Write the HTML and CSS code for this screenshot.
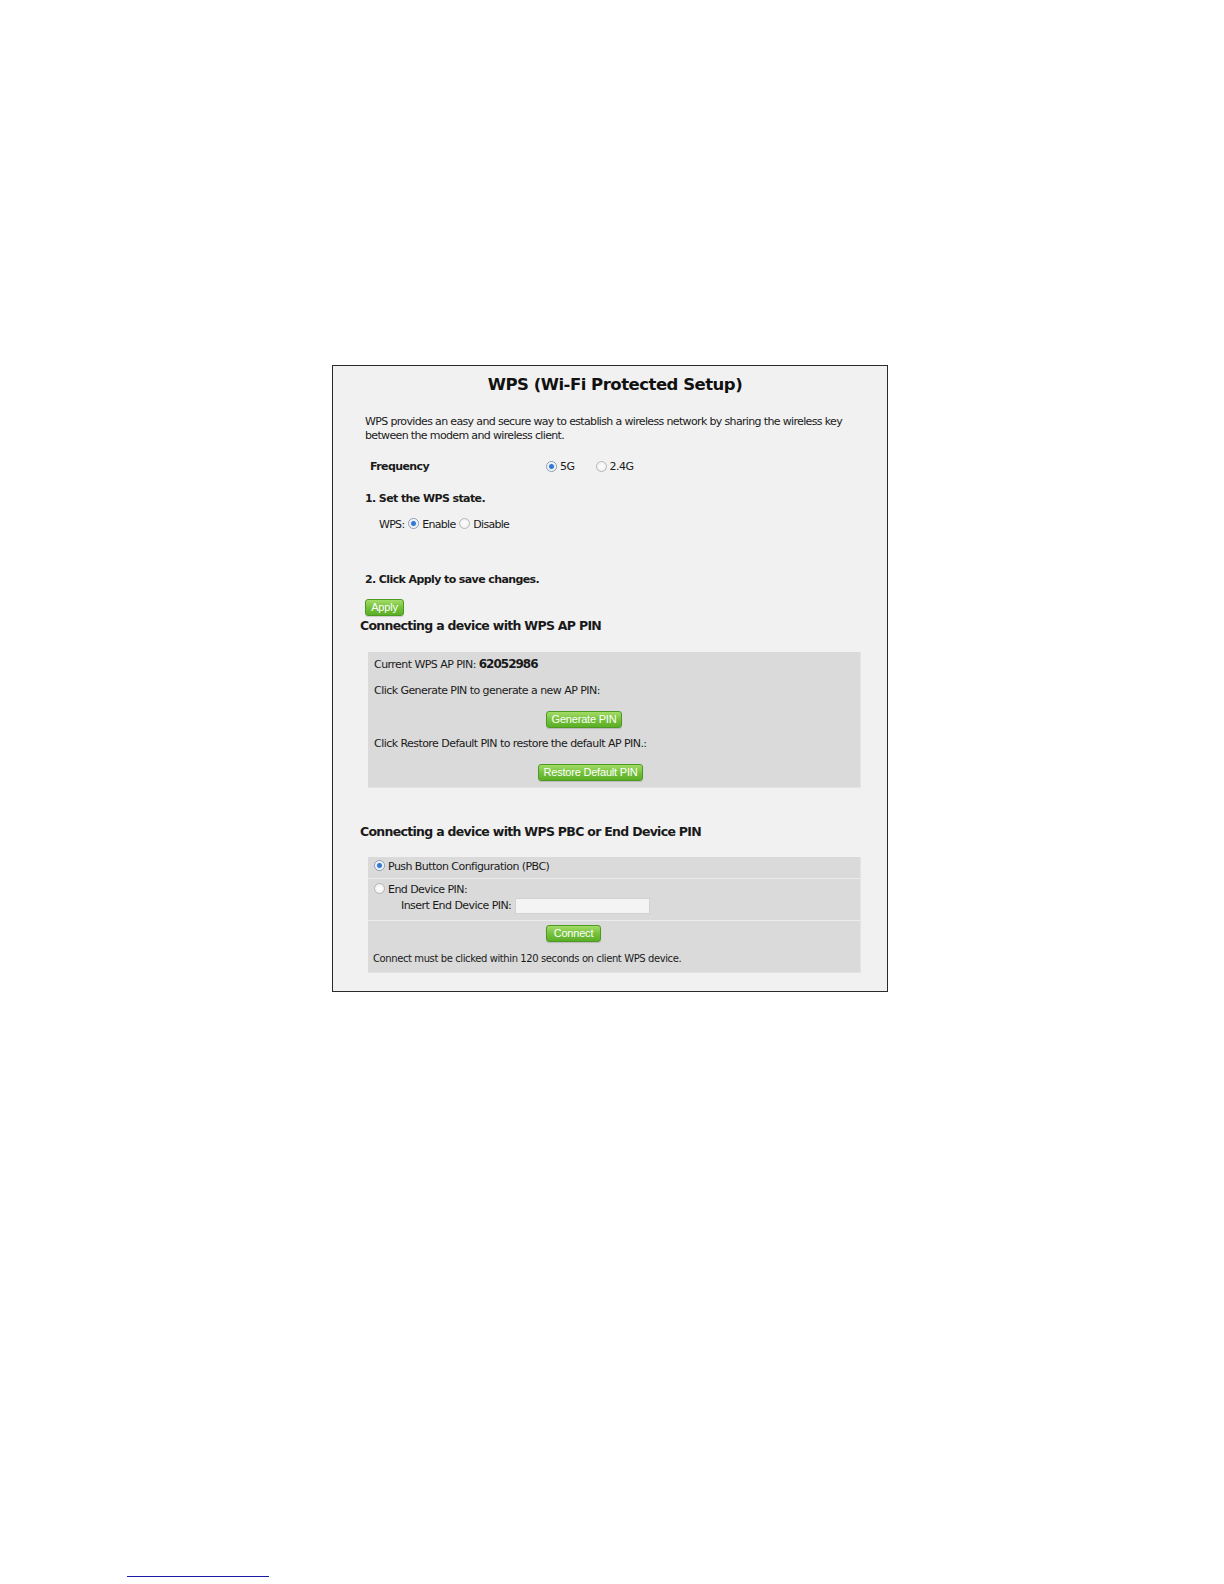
FILE: index.html
```html
<!DOCTYPE html>
<html>
<head>
    <meta charset="UTF-8">
    <title>WPS (Wi-Fi Protected Setup)</title>
    <link rel="stylesheet" href="styles.css">
</head>
<body>

<div class="screen">
    <h1 class="title">WPS (Wi-Fi Protected Setup)</h1>

    <p class="intro">WPS provides an easy and secure way to establish a wireless network by sharing the wireless key<br>between the modem and wireless client.</p>

    <div class="freq-row">
        <span class="freq-label">Frequency</span>
        <span class="opt"><span class="radio on"></span>5G</span>
        <span class="opt opt-second"><span class="radio"></span>2.4G</span>
    </div>

    <h3 class="step">1. Set the WPS state.</h3>
    <div class="wps-state">
        WPS: <span class="radio on"></span>Enable <span class="radio"></span>Disable
    </div>

    <h3 class="step step-apply">2. Click Apply to save changes.</h3>
    <button class="btn btn-apply">Apply</button>

    <h2 class="section">Connecting a device with WPS AP PIN</h2>
    <div class="gray-box pin-box">
        <p class="pin-line">Current WPS AP PIN: <b class="pin">62052986</b></p>
        <p class="hint">Click Generate PIN to generate a new AP PIN:</p>
        <div class="btn-row gen-row"><button class="btn btn-gen">Generate PIN</button></div>
        <p class="hint hint-restore">Click Restore Default PIN to restore the default AP PIN.:</p>
        <div class="btn-row restore-row"><button class="btn btn-restore">Restore Default PIN</button></div>
    </div>

    <h2 class="section section-pbc">Connecting a device with WPS PBC or End Device PIN</h2>
    <div class="gray-box pbc-box">
        <div class="pbc-row row-pbc">
            <span class="radio on"></span>Push Button Configuration (PBC)
        </div>
        <div class="pbc-row row-pin">
            <div><span class="radio"></span>End Device PIN:</div>
            <div class="insert-line">Insert End Device PIN: <input type="text" class="pin-input"></div>
        </div>
        <div class="pbc-row row-connect">
            <div class="btn-row connect-row"><button class="btn btn-connect">Connect</button></div>
            <p class="note">Connect must be clicked within 120 seconds on client WPS device.</p>
        </div>
    </div>
</div>

<div class="foot-rule"></div>

</body>
</html>
```

FILE: styles.css
```css
body {
    margin: 0;
    background: #fff;
    font-family: "DejaVu Sans", Verdana, sans-serif;
    color: #1a1a1a;
}
.screen {
    width: 554px;
    margin: 365px 0 0 332px;
    padding: 8px 0 18px 0;
    border: 1px solid #2a2a2a;
    background: #f1f1f1;
}
.title {
    margin: 0;
    padding-left: 10px;
    font-size: 16.5px;
    line-height: 22px;
    letter-spacing: -0.5px;
    text-align: center;
    color: #111;
}
.intro {
    margin: 19px 0 0 32px;
    font-size: 11px;
    line-height: 14px;
    letter-spacing: -0.65px;
}
.freq-row {
    display: flex;
    align-items: center;
    margin: 16px 0 0 37px;
    font-size: 11px;
    line-height: 15px;
    letter-spacing: -0.5px;
}
.freq-label {
    width: 175px;
    font-size: 11px;
    font-weight: bold;
    letter-spacing: -0.6px;
}
.opt {
    display: flex;
    align-items: center;
}
.opt-second {
    margin-left: 20px;
}
.radio {
    display: inline-block;
    width: 11px;
    height: 11px;
    margin: 0 3px 0 1px;
    border: 1px solid #b8b8b8;
    border-radius: 50%;
    background: radial-gradient(circle, #fff 0, #f4f4f4 60%, #dcdcdc 100%);
    vertical-align: -1px;
    box-sizing: border-box;
}
.radio.on {
    border-color: #8a9bb0;
    background: radial-gradient(circle, #2f6fd0 0, #3d7ed8 32%, #e8eef6 48%, #fff 70%, #c9d3de 100%);
}
.step {
    margin: 17px 0 0 32px;
    font-size: 11px;
    line-height: 15px;
    letter-spacing: -0.6px;
}
.wps-state {
    margin: 12px 0 0 46px;
    font-size: 11px;
    line-height: 14px;
    letter-spacing: -0.7px;
}
.step-apply {
    margin-top: 40px;
}
.btn {
    display: inline-block;
    height: 17px;
    padding: 0;
    border: 1px solid #4d9a22;
    border-radius: 3px;
    background: linear-gradient(#a3dc66, #76c23d 50%, #5cae26);
    color: #fff;
    font-family: "Liberation Sans", Arial, sans-serif;
    font-size: 11px;
    line-height: 15px;
    letter-spacing: -0.2px;
    text-align: center;
    box-shadow: 0 1px 1px rgba(0, 0, 0, 0.15);
}
.btn-apply {
    width: 39px;
    margin: 12px 0 0 32px;
}
.btn-gen {
    width: 76px;
}
.btn-restore {
    width: 105px;
}
.btn-connect {
    width: 55px;
}
.section {
    margin: 2px 0 0 27px;
    font-size: 12.5px;
    line-height: 16px;
    letter-spacing: -0.7px;
}
.section-pbc {
    margin-top: 36px;
}
.gray-box {
    width: 493px;
    margin: 18px 0 0 35px;
    background: #dadada;
    box-sizing: border-box;
    border-right: 1px solid #e4e4e4;
    border-bottom: 1px solid #e4e4e4;
    font-size: 11px;
    line-height: 14px;
    letter-spacing: -0.55px;
}
.pbc-box {
    margin-top: 17px;
}
.pin-box {
    padding: 5px 0 6px 6px;
}
.pin-box p {
    margin: 0;
}
.pin {
    font-size: 12px;
    letter-spacing: -1px;
}
.hint {
    margin-top: 12px !important;
}
.btn-row {
    display: flex;
}
.gen-row {
    margin: 13px 0 0 172px;
}
.hint-restore {
    margin-top: 9px !important;
}
.restore-row {
    margin: 13px 0 0 164px;
}
.pbc-row {
    border-bottom: 1px solid #ececec;
    padding-left: 5px;
}
.pbc-row:last-child {
    border-bottom: none;
}
.row-pbc {
    height: 21px;
    line-height: 20px;
}
.row-pin {
    height: 42px;
    padding-top: 4px;
    box-sizing: border-box;
}
.insert-line {
    display: flex;
    align-items: center;
    margin: 1px 0 0 28px;
}
.pin-input {
    width: 135px;
    height: 16px;
    margin-left: 4px;
    padding: 0;
    border: 1px solid #d2d2d2;
    background: #f4f4f4;
    box-sizing: border-box;
}
.row-connect {
    height: 51px;
    padding-top: 4px;
    box-sizing: border-box;
}
.connect-row {
    margin-left: 173px;
}
.note {
    margin: 10px 0 0;
    font-size: 10px;
    line-height: 13px;
    letter-spacing: -0.4px;
}
.foot-rule {
    width: 142px;
    height: 1px;
    margin: 584px 0 0 127px;
    background: #1a1aa6;
}
```
